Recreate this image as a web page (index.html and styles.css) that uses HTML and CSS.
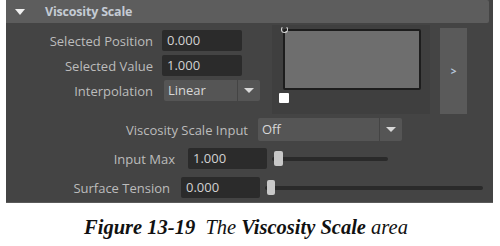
FILE: index.html
```html
<!DOCTYPE html>
<html>
<head>
<meta charset="utf-8">
<link rel="stylesheet" href="styles.css">
</head>
<body>
<div class="panel">
  <div class="header">
    <span class="tri"></span>
    <span class="title">Viscosity Scale</span>
  </div>
  <div class="body">
    <div class="top">
      <div class="fields">
        <div class="row">
          <span class="lbl lbl-top">Selected Position</span>
          <div class="field">0.000</div>
        </div>
        <div class="row">
          <span class="lbl lbl-top">Selected Value</span>
          <div class="field">1.000</div>
        </div>
        <div class="row">
          <span class="lbl lbl-top">Interpolation</span>
          <div class="dropdown dd-interp">
            <span class="dd-main">Linear</span>
            <span class="dd-arrow"><span class="arrow"></span></span>
          </div>
        </div>
      </div>
      <div class="ramp-area">
        <div class="ramp"><span class="marker"></span></div>
        <div class="swatch"></div>
      </div>
      <div class="expand">&gt;</div>
    </div>
    <div class="row row-input">
      <span class="lbl lbl-input">Viscosity Scale Input</span>
      <div class="dropdown dd-input">
        <span class="dd-main">Off</span>
        <span class="dd-arrow"><span class="arrow"></span></span>
      </div>
    </div>
    <div class="row row-max">
      <span class="lbl lbl-max">Input Max</span>
      <div class="field">1.000</div>
      <div class="slider slider-max"><span class="thumb"></span></div>
    </div>
    <div class="row row-tension">
      <span class="lbl lbl-tension">Surface Tension</span>
      <div class="field">0.000</div>
      <div class="slider slider-tension"><span class="thumb"></span></div>
    </div>
  </div>
</div>
<div class="caption"><b>Figure 13-19</b>&nbsp; The <b>Viscosity Scale</b> area</div>
</body>
</html>
```

FILE: styles.css
```css
html, body {
  margin: 0;
  padding: 0;
  background: #ffffff;
}
body {
  width: 500px;
  height: 246px;
  overflow: hidden;
}
.panel {
  margin-left: 6px;
  width: 487px;
  height: 203px;
  background: #444444;
  border-bottom: 1px solid #5a5a5a;
  box-sizing: border-box;
  font-family: "Open Sans", "DejaVu Sans", sans-serif;
  font-size: 13px;
  color: #bcbcbc;
}
.header {
  height: 23px;
  margin-right: 4px;
  background: #5d5d5d;
  border-radius: 0 2px 2px 0;
  display: flex;
  align-items: center;
}
.tri {
  width: 0;
  height: 0;
  margin-left: 9px;
  border-left: 5px solid transparent;
  border-right: 5px solid transparent;
  border-top: 6px solid #f0f0f0;
}
.title {
  margin-left: 20px;
  font-weight: 700;
  color: #c4cbd4;
  font-size: 12.5px;
  letter-spacing: -0.2px;
}
.body {
  display: flex;
  flex-direction: column;
}
.top {
  display: flex;
  height: 91px;
}
.fields {
  display: flex;
  flex-direction: column;
  gap: 4px;
  padding-top: 7px;
  width: 254px;
}
.row {
  display: flex;
  align-items: center;
  height: 21px;
}
.lbl {
  text-align: right;
  flex: none;
  white-space: nowrap;
}
.lbl-top { width: 147px; margin-right: 9px; }
.field {
  width: 80px;
  height: 21px;
  box-sizing: border-box;
  background: #2b2b2b;
  border-radius: 2px;
  color: #d2d2d2;
  padding-left: 5px;
  line-height: 21px;
  flex: none;
}
.dropdown {
  display: flex;
  height: 21px;
  gap: 1px;
  flex: none;
}
.dd-main {
  background: #555555;
  border-radius: 2px 0 0 2px;
  color: #d8d8d8;
  padding-left: 4px;
  line-height: 21px;
  box-sizing: border-box;
}
.dd-arrow {
  width: 22px;
  background: #555555;
  border-radius: 0 2px 2px 0;
  display: flex;
  align-items: center;
  justify-content: center;
}
.arrow {
  width: 0;
  height: 0;
  border-left: 5px solid transparent;
  border-right: 5px solid transparent;
  border-top: 5px solid #d8d8d8;
}
.dd-interp { margin-left: 2px; }
.dd-interp .dd-main { width: 73px; }
.ramp-area {
  margin-left: 12px;
  margin-top: 2px;
  width: 158px;
  height: 89px;
  background: #3f3f3f;
  display: flex;
  flex-direction: column;
  padding: 4px 0 0 11px;
  box-sizing: border-box;
}
.ramp {
  position: relative;
  width: 138px;
  height: 61px;
  box-sizing: border-box;
  background: #6e6e6e;
  border: 2px solid #1d1d1d;
  border-radius: 2px;
}
.marker {
  position: absolute;
  left: -4px;
  top: -5px;
  width: 5px;
  height: 5px;
  border: 1px solid #d8d8d8;
  border-top-color: transparent;
  border-radius: 50%;
}
.swatch {
  margin-left: -4px;
  margin-top: 3px;
  width: 10px;
  height: 10px;
  background: #ffffff;
  border-radius: 1px;
}
.expand {
  margin-left: 10px;
  margin-top: 5px;
  width: 27px;
  height: 86px;
  background: #5a5a5a;
  display: flex;
  align-items: center;
  justify-content: center;
  color: #b8c8dc;
  font-size: 10px;
  font-weight: 700;
}
.row-input {
  margin-top: 4px;
  height: 23px;
}
.lbl-input { width: 242px; margin-right: 10px; }
.dd-input { height: 23px; }
.dd-input .dd-main { width: 121px; line-height: 23px; }
.row-max { margin-top: 7px; }
.lbl-max { width: 169px; margin-right: 13px; }
.row-max .field { width: 79px; }
.row-tension { margin-top: 8px; }
.lbl-tension { width: 164px; margin-right: 11px; }
.row-tension .field { width: 79px; }
.slider {
  position: relative;
  height: 4px;
  background: #2a2a2a;
  border-radius: 2px;
}
.slider-max { margin-left: 5px; width: 116px; }
.slider-tension { margin-left: 5px; width: 218px; }
.thumb {
  position: absolute;
  top: -6px;
  left: 2px;
  width: 9px;
  height: 15px;
  background: #c8c8c8;
  border-radius: 2px;
}
.slider-tension .thumb { width: 8px; }
.caption {
  margin-top: 12px;
  text-align: center;
  font-family: "Liberation Serif", serif;
  font-style: italic;
  font-size: 20.5px;
  line-height: 24px;
  color: #111111;
  padding-right: 8px;
}
```
